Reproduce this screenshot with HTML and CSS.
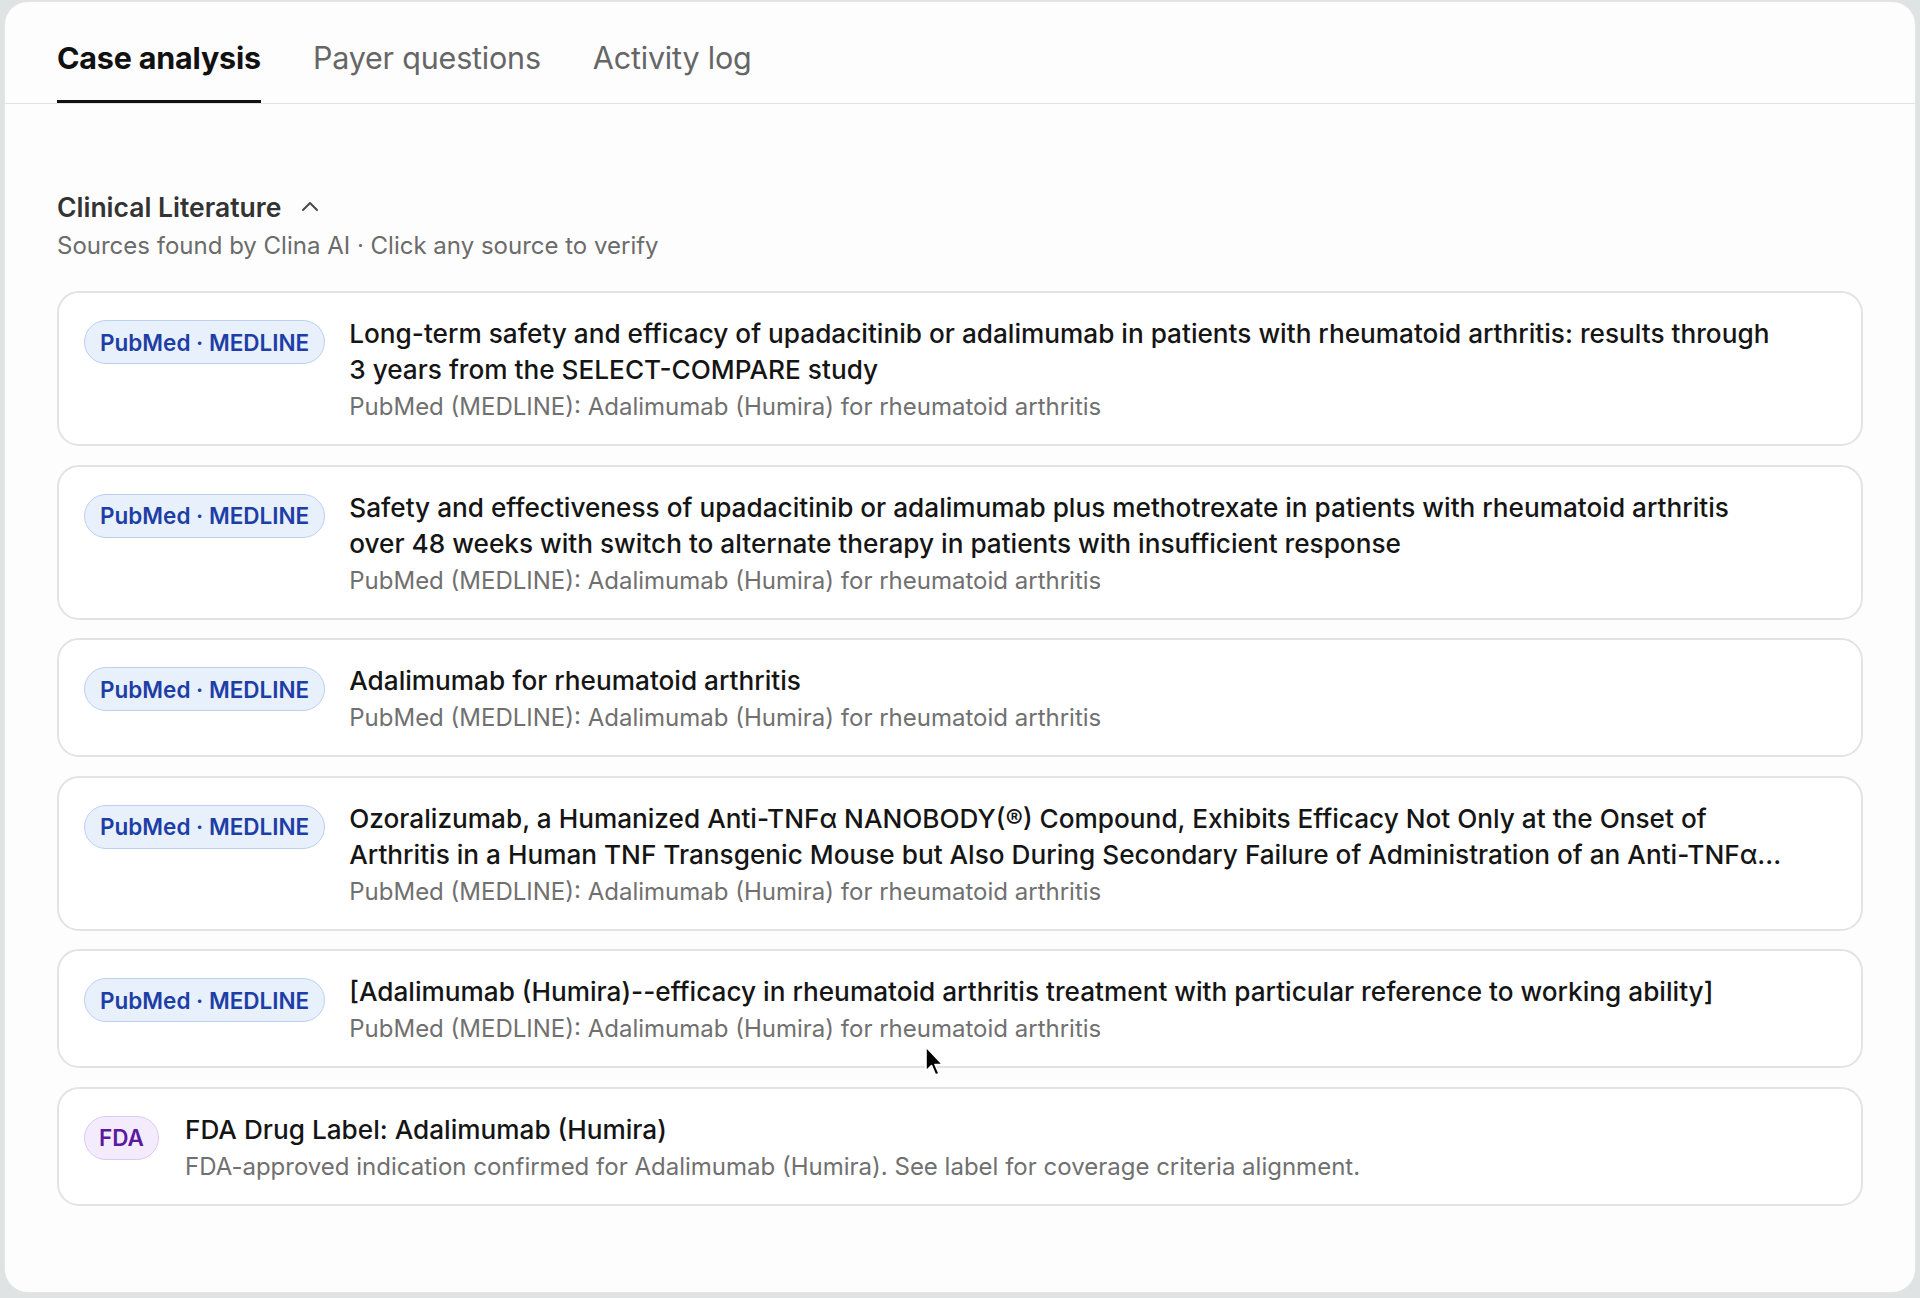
FILE: index.html
```html
<!DOCTYPE html>
<html lang="en">
<head>
<meta charset="utf-8">
<title>Case analysis</title>
<link rel="stylesheet" href="styles.css">
</head>
<body>
<div class="panel">
  <nav class="tabs">
    <a class="tab active">Case analysis</a>
    <a class="tab">Payer questions</a>
    <a class="tab">Activity log</a>
  </nav>
  <section class="section">
    <div class="section-head">
      <h2 class="section-title">Clinical Literature</h2>
      <svg class="chevron" width="18" height="11" viewBox="0 0 18 11"><path d="M2 9 L9 2 L16 9" fill="none" stroke="#4a4a4a" stroke-width="2" stroke-linecap="round" stroke-linejoin="round"/></svg>
    </div>
    <p class="section-sub">Sources found by Clina AI · Click any source to verify</p>
    <div class="list">
      <div class="card">
        <span class="badge badge-pubmed">PubMed · MEDLINE</span>
        <div class="card-body">
          <div class="card-title">Long-term safety and efficacy of upadacitinib or adalimumab in patients with rheumatoid arthritis: results through 3 years from the SELECT-COMPARE study</div>
          <div class="card-sub">PubMed (MEDLINE): Adalimumab (Humira) for rheumatoid arthritis</div>
        </div>
      </div>
      <div class="card">
        <span class="badge badge-pubmed">PubMed · MEDLINE</span>
        <div class="card-body">
          <div class="card-title">Safety and effectiveness of upadacitinib or adalimumab plus methotrexate in patients with rheumatoid arthritis over 48 weeks with switch to alternate therapy in patients with insufficient response</div>
          <div class="card-sub">PubMed (MEDLINE): Adalimumab (Humira) for rheumatoid arthritis</div>
        </div>
      </div>
      <div class="card">
        <span class="badge badge-pubmed">PubMed · MEDLINE</span>
        <div class="card-body">
          <div class="card-title">Adalimumab for rheumatoid arthritis</div>
          <div class="card-sub">PubMed (MEDLINE): Adalimumab (Humira) for rheumatoid arthritis</div>
        </div>
      </div>
      <div class="card">
        <span class="badge badge-pubmed">PubMed · MEDLINE</span>
        <div class="card-body">
          <div class="card-title">Ozoralizumab, a Humanized Anti-TNFα NANOBODY(®) Compound, Exhibits Efficacy Not Only at the Onset of Arthritis in a Human TNF Transgenic Mouse but Also During Secondary Failure of Administration of an Anti-TNFα...</div>
          <div class="card-sub">PubMed (MEDLINE): Adalimumab (Humira) for rheumatoid arthritis</div>
        </div>
      </div>
      <div class="card">
        <span class="badge badge-pubmed">PubMed · MEDLINE</span>
        <div class="card-body">
          <div class="card-title">[Adalimumab (Humira)--efficacy in rheumatoid arthritis treatment with particular reference to working ability]</div>
          <div class="card-sub">PubMed (MEDLINE): Adalimumab (Humira) for rheumatoid arthritis</div>
        </div>
      </div>
      <div class="card">
        <span class="badge badge-fda">FDA</span>
        <div class="card-body">
          <div class="card-title">FDA Drug Label: Adalimumab (Humira)</div>
          <div class="card-sub">FDA-approved indication confirmed for Adalimumab (Humira). See label for coverage criteria alignment.</div>
        </div>
      </div>
    </div>
  </section>
</div>
<svg class="cursor" width="22" height="34" viewBox="0 0 22 34"><path d="M2 2 L2 26 L7.5 20.5 L11.5 30 L15 28.5 L11 19.5 L18.5 19.5 Z" fill="#000" stroke="#fff" stroke-width="1.6" stroke-linejoin="round"/></svg>
</body>
</html>
```
FILE: styles.css
```css
* { box-sizing: border-box; }
html, body { margin: 0; padding: 0; }
body {
  background: #dfe3e3;
  font-family: "Inter", "Noto Sans", "Liberation Sans", sans-serif;
  width: 1920px;
  height: 1298px;
  overflow: hidden;
  position: relative;
  padding: 1px 4px 0 4px;
}
.panel {
  background: #fdfdfd;
  border: 1px solid #e4e6e6;
  border-radius: 24px;
  height: 1292px;
  overflow: hidden;
}
.tabs {
  display: flex;
  gap: 52px;
  padding: 0 52px;
  border-bottom: 1px solid #e2e2e2;
}
.tab {
  display: block;
  font-size: 30.5px;
  line-height: 34px;
  padding: 39px 0 25px;
  color: #666;
  border-bottom: 3px solid transparent;
  letter-spacing: -0.2px;
}
.tab.active {
  color: #111;
  font-weight: 700;
  border-bottom-color: #111;
}
.section {
  padding: 88px 52px 0;
}
.section-head {
  display: flex;
  align-items: center;
  gap: 20px;
}
.section-title {
  margin: 0;
  font-size: 26.5px;
  line-height: 30px;
  font-weight: 600;
  color: #333;
}
.chevron { margin-top: -2px; }
.section-sub {
  margin: 10px 0 0;
  font-size: 24px;
  line-height: 28px;
  color: #6b6b6b;
}
.list {
  margin-top: 31px;
  display: flex;
  flex-direction: column;
  gap: 18.6px;
}
.card {
  display: flex;
  align-items: flex-start;
  gap: 24px;
  border: 2px solid #e3e3e3;
  border-radius: 22px;
  padding: 23px 79px 22px 25px;
  background: #fff;
}
.badge {
  flex: none;
  display: inline-flex;
  align-items: center;
  height: 44px;
  border-radius: 22px;
  padding: 0 15px;
  font-size: 22.5px;
  font-weight: 600;
  margin-top: 4px;
}
.badge-pubmed {
  background: #e8f0fc;
  border: 1.5px solid #bcd0ef;
  color: #1d3ea6;
}
.badge-fda {
  background: #f4ecfc;
  border: 1.5px solid #dcc9f1;
  color: #5a1a9f;
  padding: 0 14px;
  margin-right: 2px;
}
.card-body { min-width: 0; flex: 1; }
.card-title {
  font-size: 26.2px;
  line-height: 36px;
  font-weight: 500;
  color: #151515;
}
.card-sub {
  margin-top: 4px;
  font-size: 24px;
  line-height: 30px;
  color: #707070;
}
.cursor {
  position: absolute;
  left: 924px;
  top: 1045px;
}
```
